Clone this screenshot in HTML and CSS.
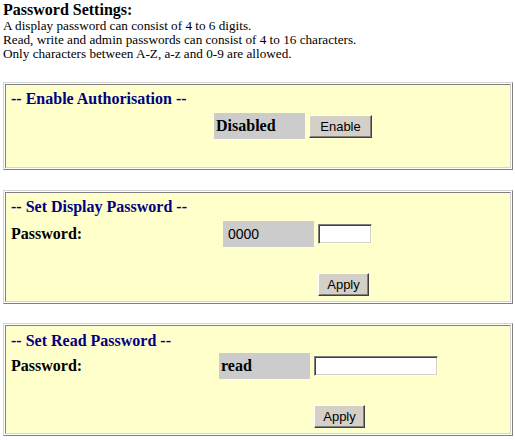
FILE: index.html
```html
<!DOCTYPE html>
<html lang="en">
<head>
  <meta charset="UTF-8" />
  <title>Password Settings</title>
  <link rel="stylesheet" href="styles.css">
</head>
<body>
  <div class="intro">
    <h2>Password Settings:</h2>
    <p>A display password can consist of 4 to 6 digits.</p>
    <p>Read, write and admin passwords can consist of 4 to 16 characters.</p>
    <p>Only characters between A-Z, a-z and 0-9 are allowed.</p>
  </div>

  <div class="box box--auth">
    <div class="box__in">
      <div class="box__title">-- Enable Authorisation --</div>
      <div class="row">
        <div class="row__label"></div>
        <div class="row__value row__value--bold">Disabled</div>
        <button class="btn">Enable</button>
      </div>
    </div>
  </div>

  <div class="box box--display">
    <div class="box__in">
      <div class="box__title">-- Set Display Password --</div>
      <div class="row">
        <div class="row__label">Password:</div>
        <div class="row__value">0000</div>
        <input class="field field--short" type="text" />
      </div>
      <div class="actions">
        <button class="btn">Apply</button>
      </div>
    </div>
  </div>

  <div class="box box--read">
    <div class="box__in">
      <div class="box__title">-- Set Read Password --</div>
      <div class="row">
        <div class="row__label">Password:</div>
        <div class="row__value row__value--bold">read</div>
        <input class="field field--long" type="text" />
      </div>
      <div class="actions">
        <button class="btn">Apply</button>
      </div>
    </div>
  </div>
</body>
</html>
```

FILE: styles.css
```css
body {
  font-family: 'Liberation Serif', serif;
  background: #fff;
  color: #000;
  margin: 0 2px 0 3px;
  padding: 0;
}
.intro h2 {
  font-size: 16px;
  line-height: 19px;
  margin: 0;
}
.intro p {
  font-size: 13.2px;
  line-height: 14px;
  margin: 0;
}
.intro {
  margin-bottom: 21px;
}
.box {
  border: 1px solid;
  border-color: #d4d4d4 #808080 #808080 #d4d4d4;
  padding: 1px;
  margin-bottom: 19px;
}
.box__in {
  border: 1px solid;
  border-color: #808080 #d4d4d4 #d4d4d4 #808080;
  background: #ffffcc;
  padding: 5px;
}
.box__title {
  color: #000080;
  font-weight: bold;
  font-size: 16px;
  line-height: 18px;
  margin-bottom: 5px;
}
.row {
  display: flex;
  align-items: center;
  gap: 4px;
}
.row__label {
  font-weight: bold;
  font-size: 16px;
}
.row__value {
  width: 86px;
  height: 26px;
  line-height: 26px;
  padding-left: 5px;
  background: #cccccc;
  font-family: 'Liberation Sans', sans-serif;
  font-size: 14px;
}
.row__value--bold {
  font-family: 'Liberation Serif', serif;
  font-weight: bold;
  font-size: 16px;
  padding-left: 2px;
  width: 89px;
}
.box--auth { margin-bottom: 20px; }
.box--auth .row__label { width: 199px; }
.box--auth .box__in { padding-bottom: 28px; }
.box--display .row__label { width: 208px; }
.box--read .row__label { width: 204px; }
.box--read .box__in { padding-top: 6px; }
.box--read .box__title { margin-bottom: 3px; }
.btn {
  font-family: 'Liberation Sans', sans-serif;
  font-size: 13px;
  background: #d4d0c8;
  color: #000;
  border: 1px solid;
  border-color: #fff #404040 #404040 #fff;
  box-shadow: inset -1px -1px #808080;
  height: 23px;
  padding: 0 6px;
  margin: 0;
}
.box--auth .btn { width: 63px; }
.field {
  height: 20px;
  box-sizing: border-box;
  border: 1px solid;
  border-color: #808080 #fff #fff #808080;
  box-shadow: inset 1px 1px #404040, inset -1px -1px #d4d0c8;
  background: #fff;
  padding: 0 2px;
  margin: 0;
}
.field--short { width: 54px; }
.field--long { width: 124px; }
.actions {
  display: flex;
  margin-top: 26px;
}
.box--display .actions { padding-left: 307px; }
.box--read .actions { padding-left: 303px; }
.actions .btn { width: 51px; }
```
